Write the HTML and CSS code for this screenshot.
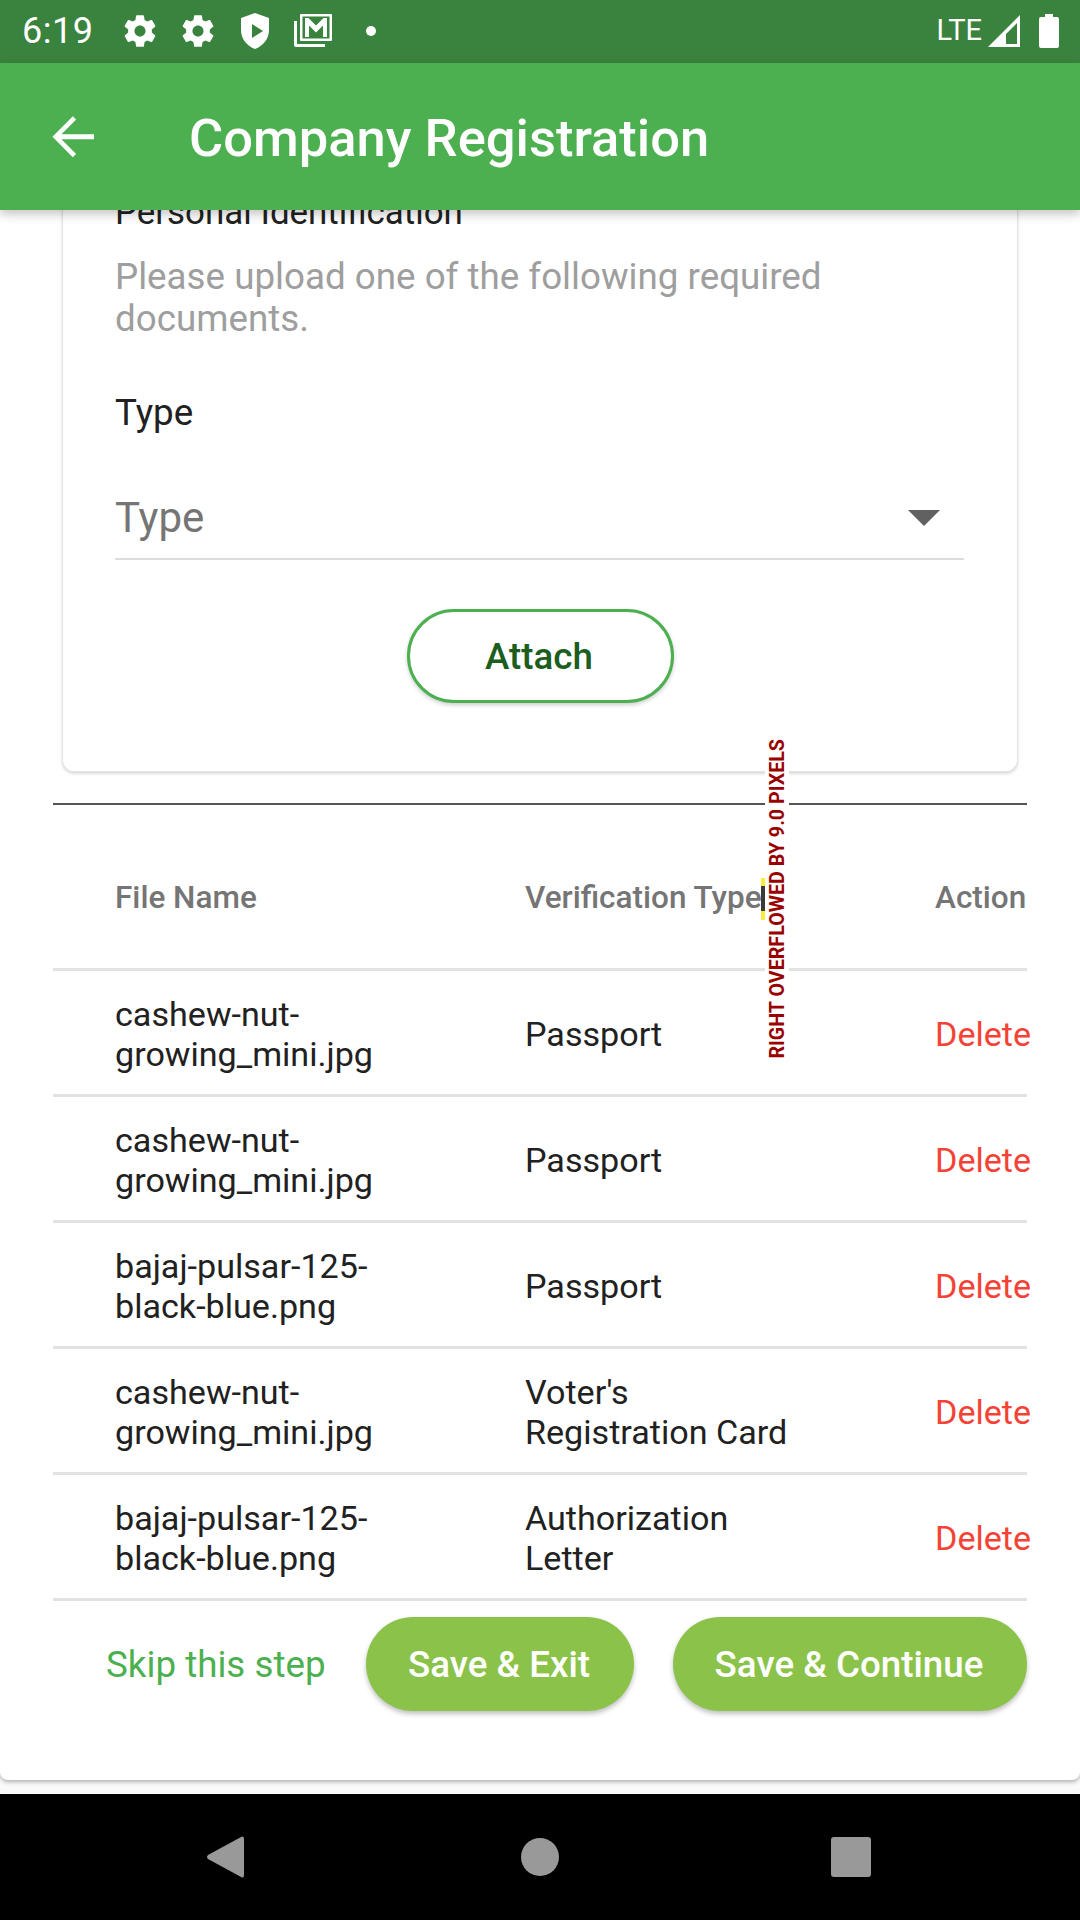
FILE: index.html
```html
<!DOCTYPE html>
<html lang="en">
<head>
<meta charset="utf-8">
<title>Company Registration</title>
<link rel="stylesheet" href="styles.css">
</head>
<body>
<div class="screen">
  <div class="status">
    <span class="clock">6:19</span>
    <svg class="st-gear" viewBox="0 0 24 24"><path d="M19.43 12.98c.04-.32.07-.64.07-.98s-.03-.66-.07-.98l2.11-1.65c.19-.15.24-.42.12-.64l-2-3.46c-.12-.22-.39-.3-.61-.22l-2.49 1c-.52-.4-1.08-.73-1.69-.98l-.38-2.65C14.46 2.18 14.25 2 14 2h-4c-.25 0-.46.18-.49.42l-.38 2.65c-.61.25-1.17.59-1.69.98l-2.49-1c-.23-.09-.49 0-.61.22l-2 3.46c-.13.22-.07.49.12.64l2.11 1.65c-.04.32-.07.65-.07.98s.03.66.07.98l-2.11 1.65c-.19.15-.24.42-.12.64l2 3.46c.12.22.39.3.61.22l2.49-1c.52.4 1.08.73 1.69.98l.38 2.65c.03.24.24.42.49.42h4c.25 0 .46-.18.49-.42l.38-2.65c.61-.25 1.17-.59 1.69-.98l2.49 1c.23.09.49 0 .61-.22l2-3.46c.12-.22.07-.49-.12-.64l-2.11-1.65zM12 15.5c-1.93 0-3.5-1.57-3.5-3.5s1.57-3.5 3.5-3.5 3.5 1.57 3.5 3.5-1.57 3.5-3.5 3.5z"/></svg>
    <svg class="st-gear st-gear2" viewBox="0 0 24 24"><path d="M19.43 12.98c.04-.32.07-.64.07-.98s-.03-.66-.07-.98l2.11-1.65c.19-.15.24-.42.12-.64l-2-3.46c-.12-.22-.39-.3-.61-.22l-2.49 1c-.52-.4-1.08-.73-1.69-.98l-.38-2.65C14.46 2.18 14.25 2 14 2h-4c-.25 0-.46.18-.49.42l-.38 2.65c-.61.25-1.17.59-1.69.98l-2.49-1c-.23-.09-.49 0-.61.22l-2 3.46c-.13.22-.07.49.12.64l2.11 1.65c-.04.32-.07.65-.07.98s.03.66.07.98l-2.11 1.65c-.19.15-.24.42-.12.64l2 3.46c.12.22.39.3.61.22l2.49-1c.52.4 1.08.73 1.69.98l.38 2.65c.03.24.24.42.49.42h4c.25 0 .46-.18.49-.42l.38-2.65c.61-.25 1.17-.59 1.69-.98l2.49 1c.23.09.49 0 .61-.22l2-3.46c.12-.22.07-.49-.12-.64l-2.11-1.65zM12 15.5c-1.93 0-3.5-1.57-3.5-3.5s1.57-3.5 3.5-3.5 3.5 1.57 3.5 3.5-1.57 3.5-3.5 3.5z"/></svg>
    <svg class="st-shield" viewBox="0 0 30 36"><path fill-rule="evenodd" d="M15 0 L29 5 V17 C29 26 23 33 15 36 C7 33 1 26 1 17 V5 Z M12 11 V25 L23 18 Z"/></svg>
    <svg class="st-mail" viewBox="2 0 38 33"><path fill-rule="evenodd" d="M8 1Q8 0 9 0H39Q40 0 40 1V26Q40 27 39 27H9Q8 27 8 26Z M10.500 2.500V24.500H37.500V2.500Z"/><path d="M13 4H16.500L24 11.500 31.500 4H35V23H31V11.500L24 18.500 17 11.500V23H13Z"/><path d="M2 7H5V30H33V33H4Q2 33 2 31Z"/></svg>
    <span class="st-dot"></span>
    <span class="st-spacer"></span>
    <span class="lte">LTE</span>
    <svg class="st-signal" viewBox="0 0 32 32"><path fill-rule="evenodd" d="M32 0V32H0Z M29 8 L18 19 V29 H29Z"/></svg>
    <svg class="st-batt" viewBox="0 0 20 34"><path d="M6 0H14V3H18Q20 3 20 5V32Q20 34 18 34H2Q0 34 0 32V5Q0 3 2 3H6Z"/></svg>
  </div>
  <header class="appbar">
    <svg class="back" viewBox="0 0 42 42"><path d="M41 18.400H10L24 4.400 20.800 1.200 1.400 20.800 20.800 40.400 24 37.200 10 23.200H41Z"/></svg>
    <h1 class="title">Company Registration</h1>
  </header>
  <main class="body">
    <div class="sheet">
      <section class="doc-card">
        <p class="doc-heading">Personal Identification</p>
        <p class="doc-hint">Please upload one of the following required documents.</p>
        <p class="doc-label">Type</p>
        <div class="select">
          <span class="select-text">Type</span>
          <span class="select-arrow"></span>
        </div>
        <div class="attach-wrap"><button class="attach">Attach</button></div>
      </section>
      <div class="table">
        <div class="row head">
          <span>File Name</span>
          <span>Verification Type</span>
          <span>Action</span>
        </div>
        <div class="row">
          <span>cashew-nut-<br>growing_mini.jpg</span>
          <span>Passport</span>
          <span class="del">Delete</span>
        </div>
        <div class="row">
          <span>cashew-nut-<br>growing_mini.jpg</span>
          <span>Passport</span>
          <span class="del">Delete</span>
        </div>
        <div class="row">
          <span>bajaj-pulsar-125-<br>black-blue.png</span>
          <span>Passport</span>
          <span class="del">Delete</span>
        </div>
        <div class="row">
          <span>cashew-nut-<br>growing_mini.jpg</span>
          <span>Voter's<br>Registration Card</span>
          <span class="del">Delete</span>
        </div>
        <div class="row">
          <span>bajaj-pulsar-125-<br>black-blue.png</span>
          <span>Authorization<br>Letter</span>
          <span class="del">Delete</span>
        </div>
        <div class="overflow-stripe"></div>
        <div class="overflow-flag"><span>RIGHT OVERFLOWED BY 9.0 PIXELS</span></div>
      </div>
      <div class="actions">
        <span class="skip">Skip this step</span>
        <button class="save save-exit">Save &amp; Exit</button>
        <button class="save save-continue">Save &amp; Continue</button>
      </div>
    </div>
  </main>
  <nav class="navbar">
    <svg class="nav-back" viewBox="0 0 37 42"><path d="M35 0.500Q37 0 37 3V39Q37 42 35 41.500L1 23Q-1 21 1 19Z"/></svg>
    <span class="nav-home"></span>
    <span class="nav-recent"></span>
  </nav>
</div>
</body>
</html>
```

FILE: styles.css
```css
* { box-sizing: border-box; }
html, body { margin: 0; padding: 0; }
body { width: 1080px; height: 1920px; overflow: hidden; font-family: Roboto, "Noto Sans", sans-serif; background: #fafafa; color: #212121; }
p, h1 { margin: 0; }
button { font-family: inherit; }

.screen { display: flex; flex-direction: column; height: 1920px; width: 1080px; }

.status { height: 63px; flex: none; background: #3a833e; display: flex; align-items: center; padding-left: 22px; padding-right: 21px; color: #fff; fill: #fff; }
.clock { font-size: 36px; font-weight: 400; letter-spacing: .5px; width: 98px; margin-top: -1px; }
.st-gear { width: 38px; height: 38px; margin-left: 1px; margin-top: -1px; }
.st-gear2 { margin-left: 20px; }
.st-shield { width: 30px; height: 36px; margin-left: 23px; margin-top: -1px; }
.st-mail { width: 38px; height: 33px; margin-left: 24px; margin-top: -2px; }
.st-dot { width: 10px; height: 10px; border-radius: 50%; background: #fff; margin-left: 34px; margin-top: -2px; }
.st-spacer { flex: 1; }
.lte { font-size: 29px; margin-right: 6px; margin-top: -3px; }
.st-signal { width: 32px; height: 32px; margin-top: -1px; }
.st-batt { width: 20px; height: 34px; margin-left: 19px; margin-top: -1px; }

.appbar { height: 147px; flex: none; background: #4caf50; display: flex; align-items: center; padding-left: 51px; position: relative; z-index: 2; box-shadow: 0 4px 10px rgba(0,0,0,.24); color: #fff; }
.back { width: 44px; height: 44px; fill: #fff; margin-top: 1px; }
.title { font-size: 52.5px; font-weight: 500; margin-left: 94px; line-height: 1; margin-top: 3px; }

.body { flex: 1; overflow: hidden; min-height: 0; }
.sheet { background: #fff; height: 1589px; margin-top: -19px; border-radius: 8px; box-shadow: 0 2px 4px rgba(0,0,0,.3); padding-left: 53px; padding-right: 53px; }

.doc-card { margin: 0 9px 0 9px; height: 581px; background: #fff; border: 1px solid #e4e4e4; border-top: 0; border-radius: 0 0 12px 12px; box-shadow: 0 2px 3px rgba(0,0,0,.14); padding: 1px 53px 0 52px; }
.doc-heading { font-size: 34.9px; line-height: 42px; }
.doc-hint { font-size: 36.75px; line-height: 41.5px; color: #9e9e9e; margin-top: 22px; }
.doc-label { font-size: 36.75px; line-height: 42px; margin-top: 53px; }
.select { display: flex; align-items: center; justify-content: space-between; height: 93px; margin-top: 33px; border-bottom: 2px solid #dcdcdc; padding-right: 24px; padding-top: 10px; }
.select-text { font-size: 42px; color: #757575; }
.select-arrow { width: 0; height: 0; border-left: 16px solid transparent; border-right: 16px solid transparent; border-top: 16px solid #616161; }
.attach-wrap { display: flex; justify-content: center; margin-top: 49px; padding-left: 1px; }
.attach { width: 267px; height: 94px; border-radius: 47px; background: #fff; border: 3px solid #4caf50; color: #1b5e20; font-size: 36.75px; font-weight: 500; box-shadow: 0 2px 4px rgba(0,0,0,.2); padding: 0 2px 0 0; }

.table { margin-top: 31px; border-top: 2px solid #555; position: relative; }
.row { display: grid; grid-template-columns: 410px 410px 92px; align-items: center; height: 126px; padding-left: 62px; padding-top: 2px; border-bottom: 3px solid #e2e2e2; font-size: 34.125px; line-height: 40px; white-space: nowrap; }
.head { height: 166px; padding-top: 22px; font-size: 31.5px; font-weight: 500; color: #757575; }
.del { color: #f44336; }
.overflow-stripe { position: absolute; left: 708px; top: 73px; width: 4px; height: 42px; background: linear-gradient(180deg, #ffeb3b 0 8px, #3a3a3a 8px 33px, #ffeb3b 33px); }
.overflow-flag { position: absolute; left: 712px; top: -68px; width: 24px; height: 324px; background: #fff; display: flex; align-items: center; justify-content: center; }
.overflow-flag span { writing-mode: vertical-rl; transform: rotate(180deg); font-size: 19.69px; font-weight: 700; color: #990000; white-space: nowrap; }

.actions { display: flex; align-items: center; height: 94px; margin-top: 16px; padding-left: 53px; }
.skip { font-size: 36.75px; color: #4caf50; width: 260px; }
.save { height: 94px; border-radius: 47px; border: 0; background: #8bc34a; color: #fff; font-size: 36.75px; font-weight: 500; box-shadow: 0 3px 5px rgba(0,0,0,.25); padding: 0 2px 0 0; }
.save-exit { width: 268px; }
.save-continue { width: 354px; margin-left: 39px; }

.navbar { height: 126px; flex: none; background: #000; position: relative; display: flex; }
.nav-back { position: absolute; left: 207px; top: 42px; width: 37px; height: 42px; fill: #999; }
.nav-home { position: absolute; left: 521px; top: 44px; width: 38px; height: 38px; border-radius: 50%; background: #999; }
.nav-recent { position: absolute; left: 831px; top: 43px; width: 40px; height: 40px; border-radius: 3px; background: #999; }
```
